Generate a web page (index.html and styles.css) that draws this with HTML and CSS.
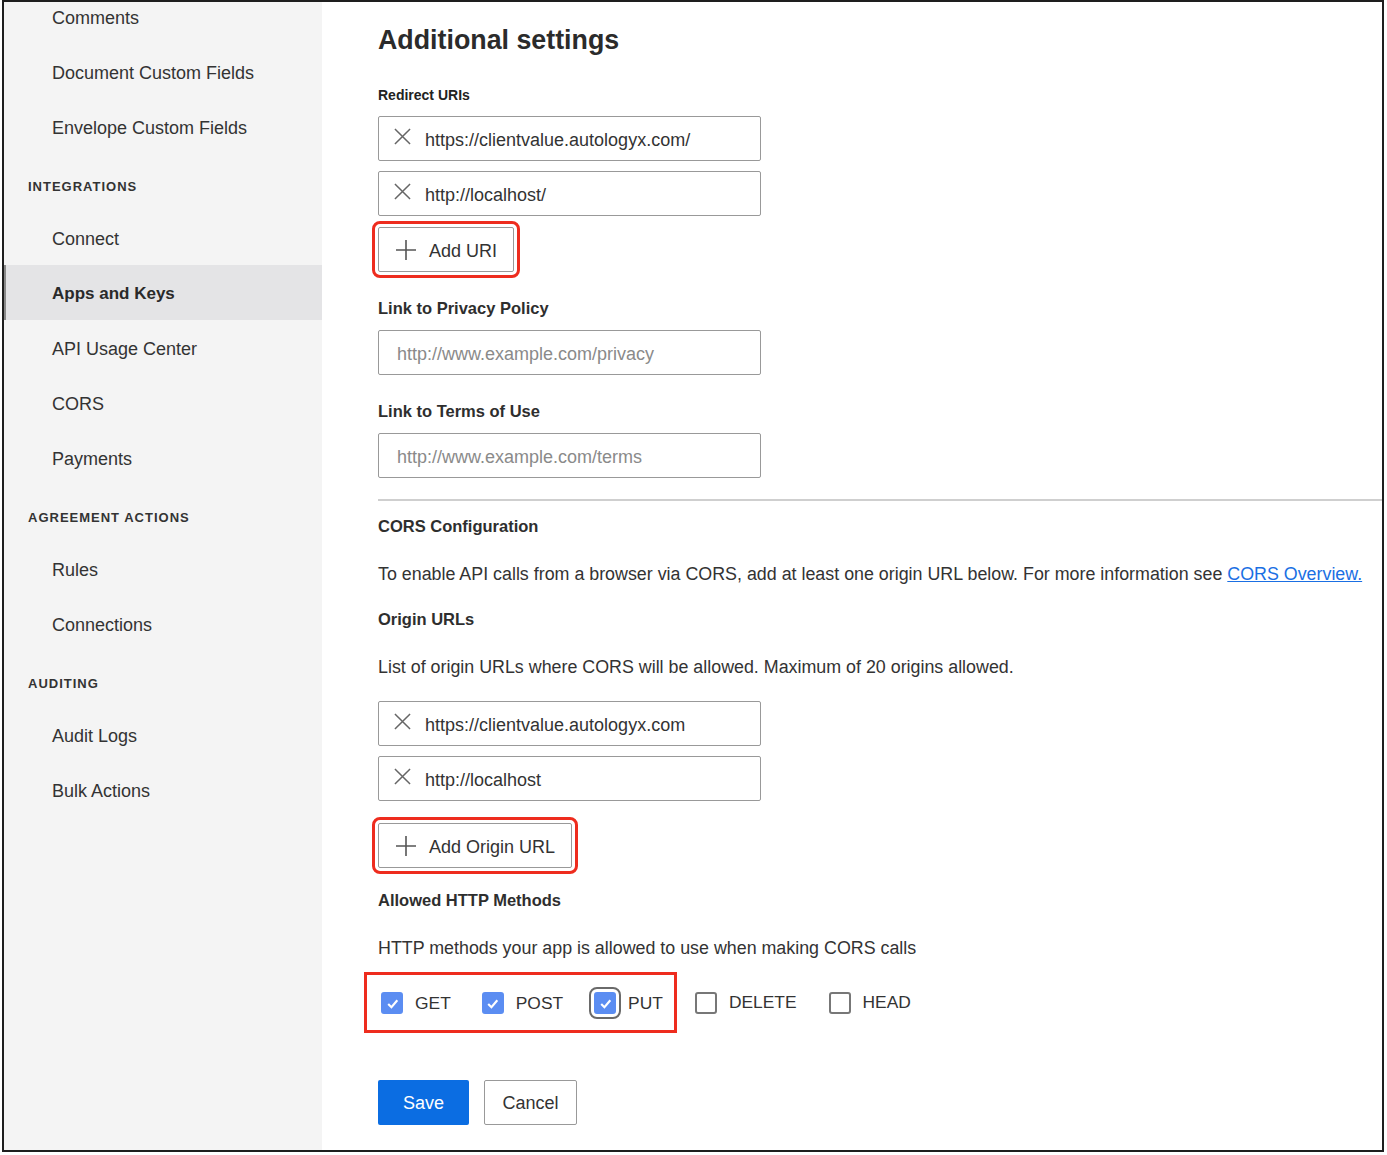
FILE: index.html
```html
<!DOCTYPE html>
<html lang="en">
<head>
    <meta charset="UTF-8">
    <meta name="viewport" content="width=device-width, initial-scale=1.0">
    <title>Apps and Keys - Additional settings</title>
    <link rel="stylesheet" href="styles.css">
</head>
<body>

    <div class="frame">
        <!-- Left navigation -->
        <nav class="sidebar">
            <ul class="nav-list">
                <li class="nav-item">Comments</li>
                <li class="nav-item">Document Custom Fields</li>
                <li class="nav-item">Envelope Custom Fields</li>
                <li class="nav-header">INTEGRATIONS</li>
                <li class="nav-item">Connect</li>
                <li class="nav-item active">Apps and Keys</li>
                <li class="nav-item">API Usage Center</li>
                <li class="nav-item">CORS</li>
                <li class="nav-item">Payments</li>
                <li class="nav-header">AGREEMENT ACTIONS</li>
                <li class="nav-item">Rules</li>
                <li class="nav-item">Connections</li>
                <li class="nav-header">AUDITING</li>
                <li class="nav-item">Audit Logs</li>
                <li class="nav-item">Bulk Actions</li>
            </ul>
        </nav>

        <main class="content">
            <h1>Additional settings</h1>

            <!-- Redirect URIs -->
            <div class="small-label">Redirect URIs</div>
            <div class="url-list">
                <div class="url-row">
                    <svg class="icon-x" viewBox="0 0 18 18"><path d="M1 1 L17 17 M17 1 L1 17"/></svg>
                    <span>https://clientvalue.autologyx.com/</span>
                </div>
                <div class="url-row">
                    <svg class="icon-x" viewBox="0 0 18 18"><path d="M1 1 L17 17 M17 1 L1 17"/></svg>
                    <span>http://localhost/</span>
                </div>
            </div>
            <button class="add-btn marked" type="button">
                <svg class="icon-plus" viewBox="0 0 20 20"><path d="M10 0 V20 M0 10 H20"/></svg>
                <span>Add URI</span>
            </button>

            <!-- Privacy / Terms -->
            <label class="field-label" for="privacy">Link to Privacy Policy</label>
            <input class="text-input" id="privacy" type="text" placeholder="http://www.example.com/privacy">

            <label class="field-label" for="terms">Link to Terms of Use</label>
            <input class="text-input" id="terms" type="text" placeholder="http://www.example.com/terms">

            <hr class="divider">

            <!-- CORS -->
            <div class="field-label cors-title">CORS Configuration</div>
            <p class="help">To enable API calls from a browser via CORS, add at least one origin URL below. For more information see <a href="#">CORS Overview.</a></p>

            <div class="field-label sub-title">Origin URLs</div>
            <p class="help">List of origin URLs where CORS will be allowed. Maximum of 20 origins allowed.</p>

            <div class="url-list origins">
                <div class="url-row">
                    <svg class="icon-x" viewBox="0 0 18 18"><path d="M1 1 L17 17 M17 1 L1 17"/></svg>
                    <span>https://clientvalue.autologyx.com</span>
                </div>
                <div class="url-row">
                    <svg class="icon-x" viewBox="0 0 18 18"><path d="M1 1 L17 17 M17 1 L1 17"/></svg>
                    <span>http://localhost</span>
                </div>
            </div>
            <button class="add-btn marked origin-btn" type="button">
                <svg class="icon-plus" viewBox="0 0 20 20"><path d="M10 0 V20 M0 10 H20"/></svg>
                <span>Add Origin URL</span>
            </button>

            <div class="field-label sub-title methods-title">Allowed HTTP Methods</div>
            <p class="help">HTTP methods your app is allowed to use when making CORS calls</p>

            <div class="methods">
                <div class="methods-marked">
                    <label class="check"><span class="box checked"><svg viewBox="0 0 14 14"><path d="M3 7.5 L6 10.5 L11.5 4"/></svg></span>GET</label>
                    <label class="check"><span class="box checked"><svg viewBox="0 0 14 14"><path d="M3 7.5 L6 10.5 L11.5 4"/></svg></span>POST</label>
                    <label class="check"><span class="box checked focused"><svg viewBox="0 0 14 14"><path d="M3 7.5 L6 10.5 L11.5 4"/></svg></span>PUT</label>
                </div>
                <label class="check delete"><span class="box"></span>DELETE</label>
                <label class="check"><span class="box"></span>HEAD</label>
            </div>

            <div class="actions">
                <button class="btn-save" type="button">Save</button>
                <button class="btn-cancel" type="button">Cancel</button>
            </div>
        </main>
    </div>

</body>
</html>
```

FILE: styles.css
```css
body {
    font-family: "Liberation Sans", Arial, sans-serif;
    margin: 0;
    background-color: #fff;
    color: #333;
}
.frame {
    box-sizing: border-box;
    margin-left: 2px;
    width: 1382px;
    height: 1152px;
    border: 2px solid #1e1e1e;
    display: flex;
    overflow: hidden;
}

/* sidebar */
.sidebar {
    width: 318px;
    flex-shrink: 0;
    background-color: #f4f4f4;
}
.nav-list {
    list-style: none;
    margin: -13px 0 0 0;
    padding: 0;
}
.nav-item {
    height: 52px;
    line-height: 52px;
    padding: 3px 0 0 48px;
    font-size: 18px;
    color: #333;
}
.nav-item.active {
    background-color: #e4e4e6;
    border-left: 2px solid #8a8a8a;
    padding-left: 46px;
    font-weight: bold;
    font-size: 17px;
    color: #2a2a2a;
}
.nav-header {
    padding: 25px 0 15px 24px;
    line-height: 16px;
    font-size: 13px;
    font-weight: bold;
    letter-spacing: 1px;
    color: #333;
}

/* main */
.content {
    flex: 1;
    padding: 22px 0 0 56px;
}
h1 {
    margin: 0;
    font-size: 26.8px;
    line-height: 32px;
    color: #2b2b2b;
}
.small-label {
    margin-top: 29px;
    font-size: 14px;
    line-height: 20px;
    font-weight: bold;
    color: #222;
}
.url-list {
    margin-top: 11px;
    display: flex;
    flex-direction: column;
    gap: 10px;
}
.url-row, .text-input {
    box-sizing: border-box;
    width: 383px;
    height: 45px;
    border: 1px solid #999;
    border-radius: 2px;
    background: #fff;
}
.url-row {
    display: flex;
    align-items: center;
    padding: 3px 0 0 15px;
    gap: 14px;
    font-size: 18px;
    color: #333;
}
.icon-x {
    width: 17px;
    height: 17px;
    margin-top: -8px;
    fill: none;
    stroke: #666;
    stroke-width: 1.6;
}
.add-btn {
    display: flex;
    align-items: center;
    gap: 13px;
    box-sizing: border-box;
    height: 45px;
    margin-top: 11px;
    padding: 0 16px 0 17px;
    background: #fff;
    border: 1px solid #999;
    border-radius: 2px;
    font-family: inherit;
    font-size: 18px;
    color: #333;
}
.add-btn span {
    padding-top: 3px;
}
.icon-plus {
    width: 20px;
    height: 20px;
    fill: none;
    stroke: #555;
    stroke-width: 1.6;
}
.marked {
    outline: 3px solid #ee2c1e;
    outline-offset: 3px;
}
.origin-btn {
    margin-top: 22px;
}
.field-label {
    display: block;
    margin-top: 25px;
    font-size: 16.5px;
    line-height: 22px;
    font-weight: bold;
    color: #2e2e2e;
}
.text-input {
    display: block;
    margin-top: 11px;
    padding: 3px 18px 0 18px;
    font-family: inherit;
    font-size: 18px;
    color: #333;
}
.text-input::placeholder {
    color: #8a8a8a;
}
.divider {
    margin: 21px 0 0 0;
    border: none;
    height: 2px;
    background-color: #cfcfcf;
}
.cors-title {
    margin-top: 14px;
}
.sub-title {
    margin-top: 22px;
}
.methods-title {
    margin-top: 21px;
}
.help {
    margin: 25px 0 0 0;
    font-size: 17.85px;
    line-height: 24px;
    color: #333;
}
.help a {
    color: #1a6fe3;
}
.origins {
    margin-top: 22px;
}

/* checkboxes */
.methods {
    display: flex;
    align-items: center;
    margin: 12px 0 0 -14px;
}
.methods-marked {
    display: flex;
    align-items: center;
    gap: 31px;
    border: 3px solid #ee2c1e;
    padding: 17px 11px 16px 14px;
}
.check {
    display: flex;
    align-items: center;
    gap: 12px;
    font-size: 17.4px;
    color: #333;
}
.check.delete {
    margin-left: 18px;
    margin-right: 32px;
}
.box {
    box-sizing: border-box;
    width: 22px;
    height: 22px;
    border: 2px solid #777;
    border-radius: 3px;
    background: #fff;
    display: flex;
    align-items: center;
    justify-content: center;
}
.box.checked {
    background-color: #5b8df2;
    border-color: #5b8df2;
}
.box svg {
    width: 15px;
    height: 15px;
    fill: none;
    stroke: #fff;
    stroke-width: 2;
}
.box.focused {
    outline: 2px solid #6a6a6a;
    outline-offset: 3px;
}

/* footer buttons */
.actions {
    display: flex;
    gap: 15px;
    margin-top: 47px;
}
.btn-save, .btn-cancel {
    box-sizing: border-box;
    height: 45px;
    padding-top: 3px;
    border-radius: 2px;
    font-family: inherit;
    font-size: 18px;
    cursor: pointer;
}
.btn-save {
    width: 91px;
    background-color: #0b6de2;
    border: none;
    color: #fff;
}
.btn-cancel {
    width: 93px;
    background: #fff;
    border: 1px solid #999;
    color: #333;
}
```
